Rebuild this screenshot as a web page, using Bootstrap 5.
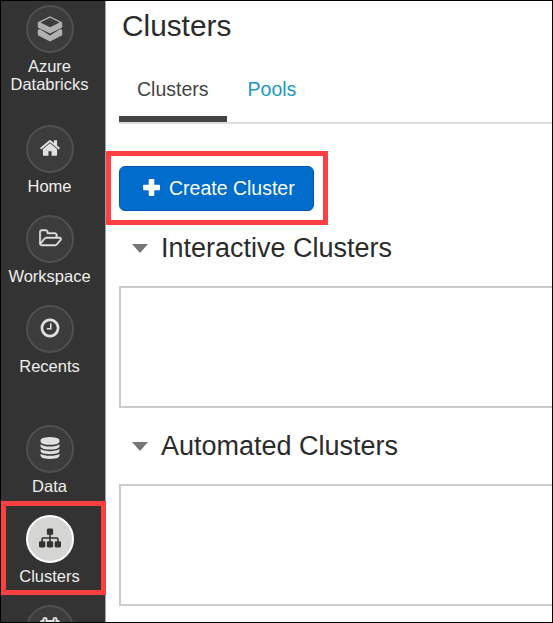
<!DOCTYPE html>
<html lang="en">
<head>
<meta charset="utf-8">
<meta name="viewport" content="width=device-width, initial-scale=1">
<title>Clusters</title>
<link href="https://cdn.jsdelivr.net/npm/bootstrap@5.3.0/dist/css/bootstrap.min.css" rel="stylesheet">
<script src="https://cdn.jsdelivr.net/npm/bootstrap@5.3.0/dist/js/bootstrap.bundle.min.js" defer></script>
<style>
body{font-family:"Liberation Sans",Arial,sans-serif;color:#2b2b2b;background:#fff}
.app-frame{height:623px;border:1px solid #000}
.side-rail{width:105px;background:#333;border-right:1px solid #a0a0a0;padding:4px 7px 0 0}
.rail-item{height:90px;color:#eee;font-size:16.5px;line-height:18px}
.rail-item.group-end{height:120px}
.rail-item:hover{color:#fff}
.rail-icon{width:48px;height:48px;border:2px solid #505050;background:#3c3c3c;margin-bottom:4px;padding-bottom:2px}
.rail-item.active .rail-icon{background:#d5d5d3;border-color:#fff;color:#333}
.rail-icon svg{width:22px;height:22px;fill:currentColor;opacity:.92}
.rail-icon svg.brand-glyph{width:26px;height:26px;margin-top:2px;opacity:.65}
.rail-icon svg.folder-glyph{width:23px;height:23px;margin-left:2px;stroke:currentColor;stroke-width:40}
.rail-item.active .rail-icon svg{opacity:1}
.rail-outline{left:0;top:500px;width:105px;height:94px;border:5px solid #ff4043}
.page-title{font-size:29.8px;line-height:36px;padding:7px 0 0 16px}
.page-tabs{margin:16px 0 0 13px;height:64px;border-bottom:2px solid #ddd!important}
.page-tabs .nav-link{font-size:19.5px;line-height:24px;border:0;border-bottom:6px solid transparent;border-radius:0;padding:17px 18px;height:62px;color:#1b98c2}
.page-tabs .nav-link.active{color:#444;border-bottom-color:#444;background:none}
.page-tabs .nav-item+.nav-item .nav-link{padding-left:21px}
.create-outline{width:222px;height:74px;border:5px solid #ff4043;margin-top:27px;padding:0 0 0 8px}
.btn-create{width:195px;height:45px;font-size:19.5px;line-height:24px;background:#006ccc;border:1px solid #0059b0;border-radius:6px;color:#fff;padding:0 0 1px 23px;gap:9px}
.btn-create svg{width:17px;height:17px;fill:#fff}
.section-title{font-size:27px;line-height:32px;margin:7px 0 0 26px;gap:13px}
.section-title svg{width:16px;height:9px;fill:#777}
.cluster-box{height:122px;margin:22px 0 0 13px;border:2px solid #ccc;border-right:0}
.cluster-box+.section-title{margin-top:22px}
</style>
</head>
<body>
<div class="app-frame d-flex overflow-hidden position-relative">
  <nav class="side-rail flex-shrink-0 d-flex flex-column">
    <a class="rail-item group-end flex-shrink-0 d-flex flex-column align-items-center text-center text-decoration-none" href="#">
      <span class="rail-icon rounded-circle d-flex align-items-center justify-content-center"><svg class="brand-glyph" viewBox="0 0 26 26"><path fill-rule="evenodd" d="M13 .3 25.200 6.300V11.500L13 17.500.8 11.500V6.300zM13 1.800 3.400 6.500 13 11.200l9.600-4.700zM.8 14l2-1L13 19.600 23.200 13l2 1v5.300L13 25.500.8 19.300z"/></svg></span>
      <span>Azure<br>Databricks</span>
    </a>
    <a class="rail-item flex-shrink-0 d-flex flex-column align-items-center text-decoration-none" href="#">
      <span class="rail-icon rounded-circle d-flex align-items-center justify-content-center"><svg viewBox="0 0 1792 1792"><path d="M1472 992v480q0 26-19 45t-45 19h-384v-384h-256v384h-384q-26 0-45-19t-19-45v-480q0-1 .5-3t.5-3l575-474 575 474q1 2 1 6zm223-69l-62 74q-8 9-21 11h-3q-13 0-21-7l-692-577-692 577q-12 8-24 7-13-2-21-11l-62-74q-8-10-7-23.500t11-21.500l719-599q32-26 76-26t76 26l244 204v-195q0-14 9-23t23-9h192q14 0 23 9t9 23v408l219 182q10 8 11 21.500t-7 23.500z"/></svg></span>
      <span>Home</span>
    </a>
    <a class="rail-item flex-shrink-0 d-flex flex-column align-items-center text-decoration-none" href="#">
      <span class="rail-icon rounded-circle d-flex align-items-center justify-content-center"><svg class="folder-glyph" viewBox="-84 0 1950 1792"><path d="M1717 931q0-35-53-35h-1088q-40 0-85.500 21.500t-71.500 52.500l-294 363q-18 24-18 40 0 35 53 35h1088q40 0 86-22t71-53l294-363q18-22 18-39zm-1141-163h768v-160q0-40-28-68t-68-28h-576q-40 0-68-28t-28-68v-64q0-40-28-68t-68-28h-320q-40 0-68 28t-28 68v853l256-315q44-53 116-87.500t140-34.500zm1269 163q0 62-46 120l-295 363q-43 53-116 87.500t-140 34.500h-1088q-92 0-158-66t-66-158v-960q0-92 66-158t158-66h320q92 0 158 66t66 158v32h544q92 0 158 66t66 158v160h192q54 0 99 24.500t67 70.500q15 32 15 68z"/></svg></span>
      <span>Workspace</span>
    </a>
    <a class="rail-item group-end flex-shrink-0 d-flex flex-column align-items-center text-decoration-none" href="#">
      <span class="rail-icon rounded-circle d-flex align-items-center justify-content-center"><svg viewBox="0 0 1792 1792"><path d="M1024 544v448q0 14-9 23t-23 9h-320q-14 0-23-9t-9-23v-64q0-14 9-23t23-9h224v-352q0-14 9-23t23-9h64q14 0 23 9t9 23zm416 352q0-148-73-273t-198-198-273-73-273 73-198 198-73 273 73 273 198 198 273 73 273-73 198-198 73-273zm224 0q0 209-103 385.500t-279.500 279.500-385.500 103-385.500-103-279.500-279.500-103-385.500 103-385.500 279.500-279.500 385.500-103 385.500 103 279.500 279.500 103 385.500z"/></svg></span>
      <span>Recents</span>
    </a>
    <a class="rail-item flex-shrink-0 d-flex flex-column align-items-center text-decoration-none" href="#">
      <span class="rail-icon rounded-circle d-flex align-items-center justify-content-center"><svg viewBox="0 0 1792 1792"><path d="M896 768q237 0 443-43t325-127v170q0 69-103 128t-280 93.500-385 34.500-385-34.500-280-93.500-103-128v-170q119 84 325 127t443 43zm0 768q237 0 443-43t325-127v170q0 69-103 128t-280 93.500-385 34.500-385-34.500-280-93.500-103-128v-170q119 84 325 127t443 43zm0-384q237 0 443-43t325-127v170q0 69-103 128t-280 93.500-385 34.500-385-34.500-280-93.500-103-128v-170q119 84 325 127t443 43zm0-1152q208 0 385 34.500t280 93.500 103 128v128q0 69-103 128t-280 93.500-385 34.500-385-34.500-280-93.500-103-128v-128q0-69 103-128t280-93.500 385-34.500z"/></svg></span>
      <span>Data</span>
    </a>
    <a class="rail-item active flex-shrink-0 d-flex flex-column align-items-center text-decoration-none" href="#">
      <span class="rail-icon rounded-circle d-flex align-items-center justify-content-center"><svg viewBox="0 0 1792 1792"><path d="M1792 1248v320q0 40-28 68t-68 28h-320q-40 0-68-28t-28-68v-320q0-40 28-68t68-28h96v-192h-512v192h96q40 0 68 28t28 68v320q0 40-28 68t-68 28h-320q-40 0-68-28t-28-68v-320q0-40 28-68t68-28h96v-192h-512v192h96q40 0 68 28t28 68v320q0 40-28 68t-68 28h-320q-40 0-68-28t-28-68v-320q0-40 28-68t68-28h96v-192q0-52 38-90t90-38h512v-192h-96q-40 0-68-28t-28-68v-320q0-40 28-68t68-28h320q40 0 68 28t28 68v320q0 40-28 68t-68 28h-96v192h512q52 0 90 38t38 90v192h96q40 0 68 28t28 68z"/></svg></span>
      <span>Clusters</span>
    </a>
    <a class="rail-item flex-shrink-0 d-flex flex-column align-items-center text-decoration-none" href="#" aria-label="Jobs">
      <span class="rail-icon rounded-circle d-flex align-items-center justify-content-center"><svg viewBox="0 0 22 22"><path fill-rule="evenodd" d="M1 5q0-2 2-2h.5V2q0-2 2.500-2t2.500 2v1h5V2q0-2 2.500-2t2.500 2v1h.5q2 0 2 2v15H1zM5.500 1.800v4h1v-4zm10 0v4h1v-4zM3 8v10h16V8z"/></svg></span>
    </a>
  </nav>
  <main class="flex-grow-1">
    <h1 class="page-title fw-normal mb-0">Clusters</h1>
    <ul class="nav nav-tabs page-tabs">
      <li class="nav-item"><a class="nav-link active" href="#">Clusters</a></li>
      <li class="nav-item"><a class="nav-link" href="#">Pools</a></li>
    </ul>
    <div class="create-outline d-flex align-items-center">
      <button type="button" class="btn btn-create d-flex align-items-center"><svg viewBox="0 0 17 17"><path d="M6.700 0h3.600q1 0 1 1v4.800H16q1 0 1 1v3.400q0 1-1 1h-4.700V16q0 1-1 1H6.700q-1 0-1-1v-4.800H1q-1 0-1-1V6.800q0-1 1-1h4.700V1q0-1 1-1z"/></svg>Create Cluster</button>
    </div>
    <h2 class="section-title fw-normal mb-0 d-flex align-items-center"><svg viewBox="0 0 16 9"><path d="M0 0h16L8 9z"/></svg>Interactive Clusters</h2>
    <div class="cluster-box"></div>
    <h2 class="section-title fw-normal mb-0 d-flex align-items-center"><svg viewBox="0 0 16 9"><path d="M0 0h16L8 9z"/></svg>Automated Clusters</h2>
    <div class="cluster-box"></div>
  </main>
  <div class="rail-outline position-absolute"></div>
</div>
</body>
</html>
